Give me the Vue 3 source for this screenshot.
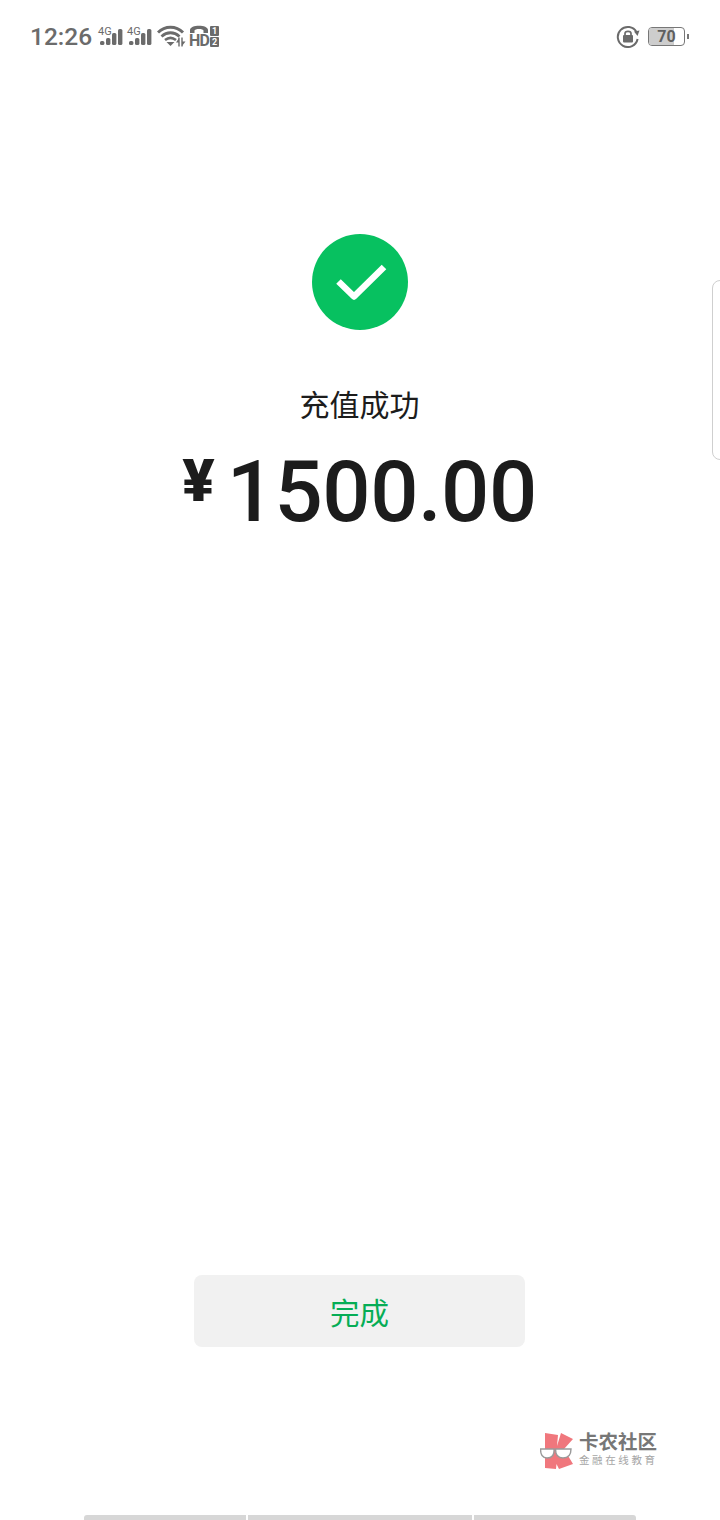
<script setup>
const signals = [{ id: 1 }, { id: 2 }];
const bars = [
  { x: 0, y: 12, h: 4 },
  { x: 6, y: 9, h: 7 },
  { x: 12, y: 4, h: 12 },
  { x: 18, y: 0, h: 16 },
];
</script>

<template>
  <div class="page">
    <header class="status-bar">
      <div class="status-left">
        <span class="time">12:26</span>
        <span v-for="s in signals" :key="s.id" class="signal">
          <span class="net">4G</span>
          <svg class="signal-bars" width="23" height="16" viewBox="0 0 23 16">
            <rect v-for="b in bars" :key="b.x" :x="b.x" :y="b.y" width="4.4" :height="b.h" rx="1.6" fill="#6b6b6b" />
          </svg>
        </span>
        <svg class="wifi" width="29" height="22" viewBox="0 0 29 22">
          <path d="M1 7.5C8 0.5 19 0.5 26 7.5" fill="none" stroke="#6b6b6b" stroke-width="3" />
          <path d="M4.5 11.5C10 6.5 17 6.5 22.5 11.5" fill="none" stroke="#6b6b6b" stroke-width="2.8" />
          <path d="M8 15C11.5 12.2 15.5 12.2 19 15" fill="none" stroke="#6b6b6b" stroke-width="2.6" />
          <path d="M9.5 17H17.5L13.5 21Z" fill="#6b6b6b" />
          <path d="M22 12.5V21.5M25 12.5V21.5" stroke="#6b6b6b" stroke-width="1.4" />
          <path d="M22 13L19 17.5H22ZM25 21L28.5 16.5H25Z" fill="#6b6b6b" />
        </svg>
        <span class="hd">
          <span class="hd-main">
            <svg width="20" height="8" viewBox="0 0 20 8">
              <path d="M1 8V5C1 -0.8 19 -0.8 19 5V8H14.5V5.5C14.5 3.4 5.5 3.4 5.5 5.5V8Z" fill="#6b6b6b" />
            </svg>
            <span class="hd-text">HD</span>
          </span>
          <span class="sims">
            <span class="sim">1</span>
            <span class="sim">2</span>
          </span>
        </span>
      </div>
      <div class="status-right">
        <svg width="24" height="24" viewBox="0 0 24 24">
          <path d="M20.6 8.2A10 10 0 1 0 21.6 15" fill="none" stroke="#6b6b6b" stroke-width="2" />
          <path d="M18 7.5L23.5 6.5L21.5 12Z" fill="#6b6b6b" />
          <rect x="7" y="11" width="10" height="7.5" rx="1" fill="#6b6b6b" />
          <path d="M9 11V9.5C9 6.6 15 6.6 15 9.5V11" fill="none" stroke="#6b6b6b" stroke-width="1.7" />
        </svg>
        <div class="battery">
          <div class="battery-body">
            <div class="battery-level"></div>
            <span class="battery-text">70</span>
          </div>
          <div class="battery-tip"></div>
        </div>
      </div>
    </header>

    <main class="result">
      <div class="success-icon">
        <svg width="96" height="96" viewBox="0 0 96 96">
          <circle cx="48" cy="48" r="48" fill="#07c160" />
          <path d="M26.5 47.5L42 62.5L72 33" fill="none" stroke="#fff" stroke-width="6.5" stroke-linejoin="round" />
        </svg>
      </div>
      <div class="title">充值成功</div>
      <div class="amount">
        <span class="currency">¥</span>
        <span class="value">1500.00</span>
      </div>
    </main>

    <button type="button" class="done-btn">完成</button>

    <div class="side-handle"></div>

    <div class="watermark">
      <svg width="35" height="40" viewBox="0 0 35 40">
        <path d="M5 1L18 3L17 14L21 1L33 7L24 17L33 32L19 37L16.5 32L16 37L5 36Z" fill="#f0777d" />
        <path d="M0.5 17H14C14.5 23 12 26 7 26C2.5 26 0.5 22.5 0.5 17Z" fill="#fff" stroke="#9a9a9a" stroke-width="1.4" />
        <path d="M15.5 17H31C31 22.5 29 26 23 26C18 26 15.5 22.5 15.5 17Z" fill="#fff" stroke="#9a9a9a" stroke-width="1.4" />
      </svg>
      <div class="mark-text">
        <div class="mark-name">卡农社区</div>
        <div class="mark-sub">金融在线教育</div>
      </div>
    </div>

    <footer class="bottom-bar">
      <div class="bar-seg seg-left"></div>
      <div class="bar-seg seg-mid"></div>
      <div class="bar-seg seg-right"></div>
    </footer>
  </div>
</template>

<style>
html,
body {
  margin: 0;
  background: #fff;
}
</style>

<style scoped>
.page {
  position: relative;
  width: 720px;
  height: 1520px;
  overflow: hidden;
  background: #fff;
  display: flex;
  flex-direction: column;
  font-family: Roboto, "Noto Sans CJK SC", sans-serif;
}

.status-bar {
  height: 72px;
  padding: 0 31px 0 30px;
  display: flex;
  align-items: center;
  justify-content: space-between;
  color: #6b6b6b;
  box-sizing: border-box;
}
.status-left {
  display: flex;
  align-items: center;
}
.time {
  width: 62px;
  font-size: 24.5px;
  font-weight: 500;
  margin-right: 7px;
}
.signal {
  position: relative;
  width: 23px;
  height: 22px;
  margin-right: 6px;
}
.net {
  position: absolute;
  left: -1px;
  top: 0;
  font-size: 11px;
  line-height: 13px;
}
.signal-bars {
  position: absolute;
  left: 1px;
  top: 4px;
}
.wifi {
  margin-right: 3px;
}
.hd {
  display: flex;
  align-items: flex-start;
  gap: 1px;
}
.hd-main {
  display: flex;
  flex-direction: column;
  align-items: center;
  width: 20px;
}
.hd-main svg {
  display: block;
}
.hd-text {
  font-size: 16px;
  line-height: 14px;
  margin-top: 1px;
  font-weight: 700;
  letter-spacing: -0.8px;
}
.sims {
  display: flex;
  flex-direction: column;
  gap: 1px;
  padding-top: 1px;
}
.sim {
  width: 9px;
  height: 10px;
  border-radius: 1px;
  background: #6b6b6b;
  color: #fff;
  font-size: 9px;
  line-height: 10px;
  font-weight: 700;
  text-align: center;
}

.status-right {
  display: flex;
  align-items: center;
  gap: 8px;
}
.battery {
  display: flex;
  align-items: center;
  gap: 2px;
}
.battery-body {
  position: relative;
  width: 35px;
  height: 17px;
  border: 1.5px solid #777;
  border-radius: 4px;
  overflow: hidden;
}
.battery-level {
  position: absolute;
  left: 0;
  top: 0;
  bottom: 0;
  width: 72%;
  background: #cdcdcd;
}
.battery-text {
  position: absolute;
  inset: 0;
  text-align: center;
  font-size: 16px;
  line-height: 17px;
  font-weight: 700;
  color: #5f5f5f;
}
.battery-tip {
  width: 2px;
  height: 5px;
  background: #777;
}

.result {
  padding-top: 162px;
  padding-right: 1px;
  display: flex;
  flex-direction: column;
  align-items: center;
}
.success-icon {
  height: 96px;
}
.success-icon svg {
  display: block;
}
.title {
  margin-top: 56px;
  font-size: 30px;
  line-height: 40px;
  color: #1c1c1c;
}
.amount {
  margin-top: 16px;
  display: flex;
  align-items: flex-start;
  color: #1c1c1c;
}
.currency {
  font-size: 60px;
  line-height: 58px;
  font-weight: 900;
  margin-top: 10px;
  margin-right: 12px;
}
.value {
  font-size: 85px;
  line-height: 100px;
  font-weight: 500;
  letter-spacing: -0.5px;
}

.done-btn {
  margin: auto 195px 173px 194px;
  width: 331px;
  height: 72px;
  border: 0;
  border-radius: 8px;
  background: #f1f1f1;
  color: #06ad56;
  font-family: inherit;
  font-size: 29.5px;
  padding: 0;
}

.side-handle {
  position: absolute;
  right: -10px;
  top: 280px;
  width: 16px;
  height: 178px;
  border: 1px solid #cfcfcf;
  border-radius: 8px;
}

.watermark {
  position: absolute;
  left: 540px;
  top: 1432px;
  display: flex;
  align-items: flex-start;
  gap: 4px;
}
.mark-text {
  color: #8a8a8a;
}
.mark-name {
  font-size: 19.5px;
  line-height: 22px;
  font-weight: 700;
  color: #777;
}
.mark-sub {
  font-size: 10.5px;
  line-height: 13px;
  letter-spacing: 2.6px;
  color: #a5a5a5;
}

.bottom-bar {
  position: absolute;
  left: 84px;
  bottom: 0;
  width: 552px;
  height: 5px;
  display: flex;
  gap: 2px;
}
.bar-seg {
  background: #d7d7d7;
}
.seg-left {
  width: 162px;
  border-radius: 3px 0 0 0;
}
.seg-mid {
  width: 224px;
}
.seg-right {
  width: 162px;
  border-radius: 0 3px 0 0;
}
</style>
